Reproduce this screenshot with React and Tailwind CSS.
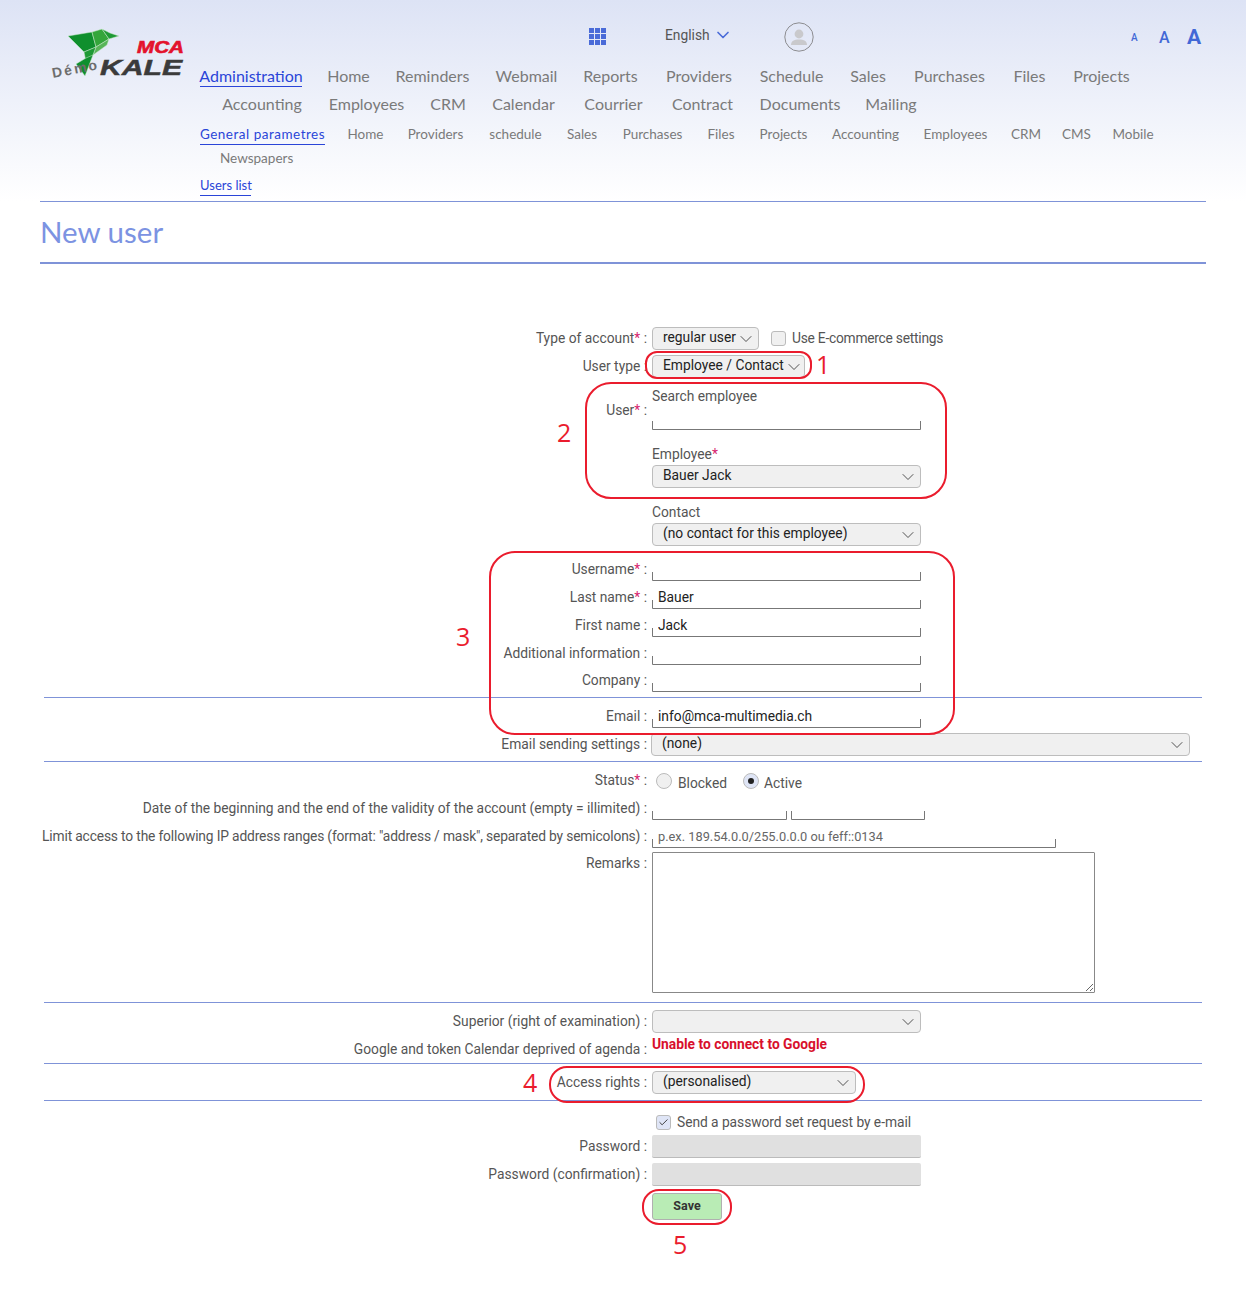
import React from "react";
import { ChevronDown, Check } from "lucide-react";

const navOne = [
  ["Administration", "w-[102px]"],
  ["Home", "w-[39px]"],
  ["Reminders", "w-[75px]"],
  ["Webmail", "w-[59px]"],
  ["Reports", "w-[55px]"],
  ["Providers", "w-[68px]"],
  ["Schedule", "w-[63px]"],
  ["Sales", "w-[36px]"],
  ["Purchases", "w-[73px]"],
  ["Files", "w-[33px]"],
  ["Projects", "w-[57px]"],
];

const navTwo = [
  ["Accounting", "w-[78px]"],
  ["Employees", "w-[77px]"],
  ["CRM", "w-[32px]"],
  ["Calendar", "w-[65px]"],
  ["Courrier", "w-[61px]"],
  ["Contract", "w-[63px]"],
  ["Documents", "w-[78px]"],
  ["Mailing", "w-[50px]"],
];

const subNav = [
  ["General parametres", "w-[125px]"],
  ["Home", "w-[35px]"],
  ["Providers", "w-[59px]"],
  ["schedule", "w-[55px]"],
  ["Sales", "w-[32px]"],
  ["Purchases", "w-[63px]"],
  ["Files", "w-[28px]"],
  ["Projects", "w-[51px]"],
  ["Accounting", "w-[67px]"],
  ["Employees", "w-[67px]"],
  ["CRM", "w-[28px]"],
  ["CMS", "w-[27px]"],
  ["Mobile", "w-[40px]"],
];

const NavRow = ({ items, className }) => (
  <div className={`flex whitespace-nowrap ${className}`}>
    {items.map(([label, width], i) => (
      <span
        key={label}
        className={`${width} flex justify-center ${i === 0 && items === navOne ? "text-[#2a45d8] border-b border-[#2a45d8] h-[23px]" : ""} ${i === 0 && items === subNav ? "text-[#2a45d8] border-b border-[#2a45d8] h-[21px] tracking-[0.5px]" : ""}`}
      >
        {label}
      </span>
    ))}
  </div>
);

const Logo = () => (
  <svg width="200" height="90" viewBox="0 0 200 90">
    <g stroke="#cfe8cf" strokeWidth="0.5">
      <polygon points="68,36 92,32 96,47 84,52" fill="#0f8f2d" />
      <polygon points="92,32 102,29 109,39 96,47" fill="#34a63a" />
      <polygon points="102,29 110,33 119,36 109,39" fill="#1f9a35" />
      <polygon points="109,39 107,45 93,55 96,47" fill="#58b558" />
      <polygon points="84,52 96,47 93,55 86,62" fill="#1f9a35" />
      <polygon points="93,55 85,76 76,64 86,58" fill="#0f8f2d" />
    </g>
    <text x="137" y="53" fontFamily="Liberation Sans" fontWeight="700" fontStyle="italic" fontSize="16" textLength="47" lengthAdjust="spacingAndGlyphs" fill="#e3122c" stroke="#e3122c" strokeWidth="0.6">MCA</text>
    <text x="100" y="75" fontFamily="Liberation Sans" fontWeight="700" fontStyle="italic" fontSize="22" textLength="82" lengthAdjust="spacingAndGlyphs" fill="#3b3b3b" stroke="#3b3b3b" strokeWidth="0.5">KALE</text>
    <text x="53" y="78" fontFamily="Liberation Sans" fontWeight="700" fontSize="14" letterSpacing="2.2" fill="#6d6d6d" transform="rotate(-11 53 78)">Démo</text>
  </svg>
);

const Apps = () => (
  <div className="grid grid-cols-3 gap-[1px] w-[17px]">
    {Array.from({ length: 9 }).map((_, i) => (
      <span key={i} className="h-[5px] w-[5px] bg-[#4a6bd8]" />
    ))}
  </div>
);

const Avatar = () => (
  <svg width="30" height="30" viewBox="0 0 30 30">
    <circle cx="15" cy="15" r="14.2" fill="none" stroke="#8c8c90" strokeWidth="1" />
    <circle cx="15" cy="12" r="4.4" fill="#c9c9cc" />
    <path d="M7 23c0-4 3-5.6 8-5.6s8 1.6 8 5.6z" fill="#c9c9cc" />
  </svg>
);

const Label = ({ children, star }) => (
  <div className="w-[607px] shrink-0 text-right leading-[28px] whitespace-nowrap flex justify-end">
    <span>
      {children}
      {star && <span className="text-[#d6246e]">*</span>}
      {" :"}
    </span>
  </div>
);

const Row = ({ label, star, height = "h-[28px]", children }) => (
  <div className={`flex ${height}`}>
    <Label star={star}>{label}</Label>
    <div className="ml-[5px] pt-[3px] min-w-0 flex-1">{children}</div>
  </div>
);

const Select = ({ value, width = "w-[269px]" }) => (
  <div className={`${width} h-[23px] bg-[#f0f0f0] border border-[#bdbdbd] rounded-[4px] flex items-center justify-between pl-[10px] pr-[2px] text-[#222] leading-none whitespace-nowrap`}>
    <span className="pb-px">{value}</span>
    <ChevronDown size={20} strokeWidth={1} className="text-[#333] shrink-0" />
  </div>
);

const Field = ({ value = "", placeholder, width = "w-[269px]" }) => (
  <input
    readOnly
    value={value}
    placeholder={placeholder}
    className={`${width} h-[23px] px-[6px] block text-[#222] placeholder:text-[#666] placeholder:text-[12.8px] border-b border-[#777] rounded-[1px] bg-[linear-gradient(#777,#777),linear-gradient(#777,#777)] bg-[length:1px_8px] bg-[position:left_bottom,right_bottom] bg-no-repeat outline-none`}
  />
);

const Hr = ({ className = "" }) => <div className={`h-px bg-[#7f93d8] mx-[4px] ${className}`} />;

const Note = ({ className }) => (
  <div className={`absolute border-2 border-[#ea1c2d] pointer-events-none ${className}`} />
);

const Num = ({ className, children }) => (
  <span className={`absolute text-[25px] leading-none text-[#ea1c2d] font-['Open_Sans',sans-serif] ${className}`}>{children}</span>
);

export default function App() {
  return (
    <div className="relative bg-white min-h-[1309px] font-['Roboto',sans-serif] text-[13.8px] text-[#555]">
      <header className="h-[201px] flex bg-[linear-gradient(#dde3f5,#ffffff)]">
        <div className="w-[200px] shrink-0">
          <Logo />
        </div>
        <div className="flex-1 font-['Lato',sans-serif] text-[#7a7a7a]">
          <div className="h-[64px] flex items-start pt-[22px] relative">
            <div className="ml-[389px] mt-[6px]"><Apps /></div>
            <div className="ml-[59px] mt-[3px] flex items-center gap-[3px] text-[13.8px] text-[#555] font-['Roboto',sans-serif] w-[119px] h-[20px]">
              English
              <ChevronDown size={20} strokeWidth={2} className="text-[#4a6bd8]" />
            </div>
            <Avatar />
            <div className="ml-[317px] flex items-center text-[#4268d6] font-['Roboto',sans-serif] font-bold h-[30px] pt-[1px]">
              <span className="text-[10px] w-[28px] font-medium">A</span>
              <span className="text-[16px] w-[28px] font-medium">A</span>
              <span className="text-[21px]">A</span>
            </div>
          </div>
          <NavRow items={navOne} className="text-[16px] leading-[23px] gap-[27px]" />
          <NavRow items={navTwo} className="text-[16px] leading-[23px] gap-[27px] pl-[23px] mt-[5px]" />
          <NavRow items={subNav} className="text-[13.5px] leading-[20px] gap-[23px] mt-[9px]" />
          <div className="pl-[20px] text-[13.5px] leading-[20px] mt-[3px]">Newspapers</div>
          <div className="mt-[7px] text-[13px] leading-[20px] w-[51px] text-[#2a45d8] border-b border-[#2a45d8] h-[21px] whitespace-nowrap">Users list</div>
        </div>
      </header>

      <div className="mx-[40px]">
        <div className="h-[60px] border-t border-[#7f93d8] border-b-2 border-b-[#7f93d8] flex items-center font-['Lato',sans-serif] text-[29.5px] text-[#7c93e2] box-content">
          New user
        </div>

        <div className="mt-[60px]">
          <Row label="Type of account" star>
            <div className="flex items-center">
              <Select value="regular user" width="w-[107px]" />
              <span className="ml-[12px] w-[15px] h-[15px] rounded-[3px] border border-[#bbb] bg-[#f0f0f0]" />
              <span className="ml-[6px] tracking-[-0.25px] whitespace-nowrap">Use E-commerce settings</span>
            </div>
          </Row>
          <Row label="User type" height="h-[27px]">
            <Select value="Employee / Contact" width="w-[153px]" />
          </Row>

          <div className="flex h-[176px]">
            <div className="w-[607px] shrink-0 pt-[17px] text-right leading-[28px]">
              User<span className="text-[#d6246e]">*</span> :
            </div>
            <div className="ml-[5px] pt-[7px]">
              <div className="leading-[21px]">Search employee</div>
              <Field />
              <div className="leading-[20px] mt-[14px]">Employee<span className="text-[#d6246e]">*</span></div>
              <div className="mt-px"><Select value="Bauer Jack" /></div>
              <div className="leading-[20px] mt-[14px]">Contact</div>
              <div className="mt-px"><Select value="(no contact for this employee)" /></div>
            </div>
          </div>

          <Row label="Username" star><Field /></Row>
          <Row label="Last name" star><Field value="Bauer" /></Row>
          <Row label="First name"><Field value="Jack" /></Row>
          <Row label="Additional information" height="h-[27px]"><Field /></Row>
          <Row label="Company"><Field /></Row>
          <Hr className="mt-[3px]" />
          <div className="mt-[4px]">
            <Row label="Email"><Field value="info@mca-multimedia.ch" /></Row>
          </div>
          <Row label="Email sending settings">
            <div className="-ml-px"><Select value="(none)" width="w-[539px]" /></div>
          </Row>
          <Hr className="mt-[3px]" />
          <div className="mt-[4px]">
            <Row label="Status" star>
              <div className="flex items-center h-[23px] pl-[4px] pt-[6px]">
                <span className="w-[16px] h-[16px] rounded-full border border-[#bbb] bg-[#f0f0f0] -mt-[6px]" />
                <span className="ml-[6px]">Blocked</span>
                <span className="ml-[16px] w-[16px] h-[16px] rounded-full border border-[#bbb] bg-[#dfe5f6] -mt-[6px] flex items-center justify-center">
                  <span className="w-[6px] h-[6px] rounded-full bg-[#222]" />
                </span>
                <span className="ml-[5px]">Active</span>
              </div>
            </Row>
          </div>
          <Row label="Date of the beginning and the end of the validity of the account (empty = illimited)">
            <div className="flex gap-[4px]">
              <Field width="w-[135px]" />
              <Field width="w-[134px]" />
            </div>
          </Row>
          <Row label={<span className="tracking-[-0.16px]">Limit access to the following IP address ranges (format: "address / mask", separated by semicolons)</span>} height="h-[27px]">
            <Field placeholder="p.ex. 189.54.0.0/255.0.0.0 ou feff::0134" width="w-[404px]" />
          </Row>
          <Row label="Remarks" height="h-[153px]">
            <textarea readOnly className="w-[443px] h-[141px] block border border-[#888] rounded-[1px] outline-none" />
          </Row>
          <Hr />
          <div className="mt-[4px]">
            <Row label="Superior (right of examination)"><Select value="" /></Row>
          </div>
          <div className="flex h-[28px]">
            <Label>Google and token Calendar deprived of agenda</Label>
            <div className="ml-[5px] font-bold text-[#d8102c] leading-[18px] whitespace-nowrap">Unable to connect to Google</div>
          </div>
          <Hr />
          <div className="mt-[4px]">
            <Row label="Access rights"><Select value="(personalised)" width="w-[204px]" /></Row>
          </div>
          <Hr className="mt-[4px]" />

          <div className="h-[31px] pt-[11px] flex items-center pl-[616px]">
            <span className="w-[15px] h-[15px] rounded-[3px] border border-[#bbb] bg-[#dfe5f6] flex items-center justify-center">
              <Check size={11} strokeWidth={2} className="text-[#333]" />
            </span>
            <span className="ml-[6px] whitespace-nowrap tracking-[-0.05px]">Send a password set request by e-mail</span>
          </div>
          <Row label="Password">
            <div className="w-[269px] h-[23px] bg-[#e0e0e0] rounded-[2px] border-b border-[#bbb]" />
          </Row>
          <Row label="Password (confirmation)">
            <div className="w-[269px] h-[23px] bg-[#e0e0e0] rounded-[2px] border-b border-[#bbb]" />
          </Row>
          <div className="pl-[612px] mt-[5px]">
            <button className="w-[70px] h-[27px] bg-[#b9ecb5] border border-[#b0b0b0] rounded-[3px] text-[12.5px] font-bold text-[#333]">Save</button>
          </div>
        </div>
      </div>

      <Note className="left-[645px] top-[351px] w-[167px] h-[28px] rounded-[12px]" />
      <Note className="left-[585px] top-[382px] w-[362px] h-[117px] rounded-[26px]" />
      <Note className="left-[489px] top-[551px] w-[466px] h-[184px] rounded-[26px]" />
      <Note className="left-[549px] top-[1066px] w-[316px] h-[37px] rounded-[18px]" />
      <Note className="left-[642px] top-[1189px] w-[90px] h-[36px] rounded-[17px]" />
      <Num className="left-[816px] top-[352px]">1</Num>
      <Num className="left-[557px] top-[420px]">2</Num>
      <Num className="left-[456px] top-[624px]">3</Num>
      <Num className="left-[523px] top-[1070px]">4</Num>
      <Num className="left-[673px] top-[1232px]">5</Num>
    </div>
  );
}
